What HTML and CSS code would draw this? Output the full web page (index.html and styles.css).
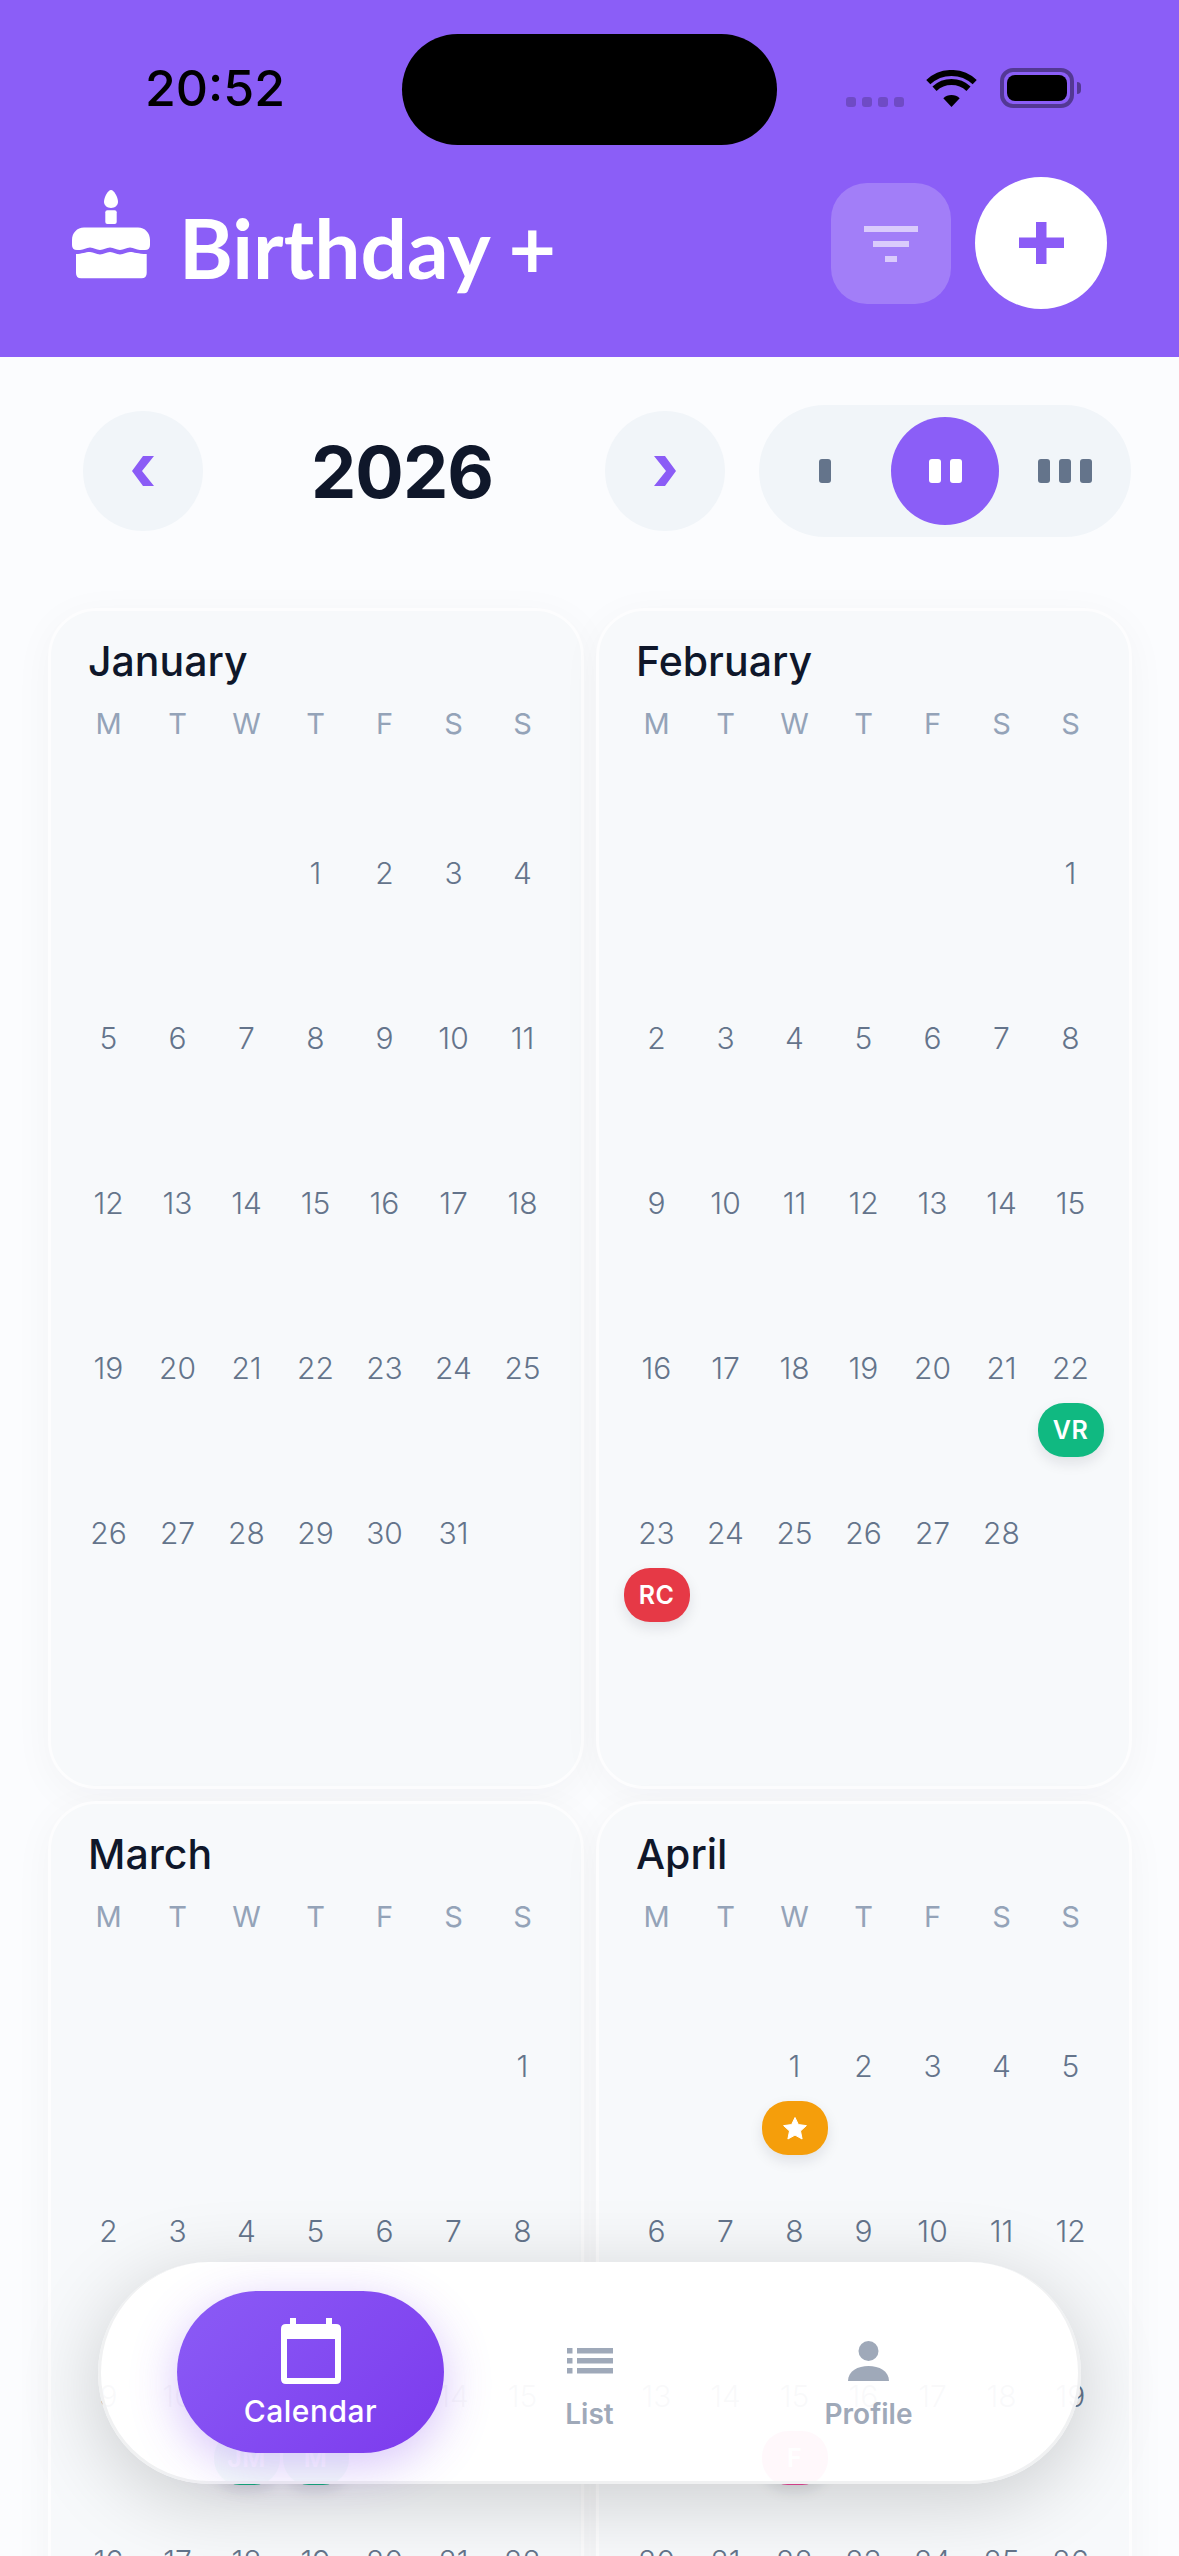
FILE: index.html
```html
<!DOCTYPE html>
<html lang="en">
<head>
	<meta charset="UTF-8">
	<title>Birthday +</title>
	<link rel="stylesheet" href="styles.css">
</head>
<body>
<div class="app">
	<header class="top">
		<div class="status">
			<span class="time">20:52</span>
			<span class="island"></span>
			<div class="status-icons">
				<span class="signal"><i></i><i></i><i></i><i></i></span>
				<svg class="wifi" width="51" height="37" viewBox="0 0 51 37">
					<path d="M2.3 12.1A34 34 0 0 1 48.7 12.1" fill="none" stroke="#000" stroke-width="6"/>
					<path d="M8.5 18.7A25 25 0 0 1 42.5 18.7" fill="none" stroke="#000" stroke-width="6"/>
					<path d="M25.5 37L17.3 28.2A12 12 0 0 1 33.7 28.2Z" fill="#000"/>
				</svg>
				<span class="battery"><i></i></span>
				<span class="battery-cap"></span>
			</div>
		</div>
		<div class="brand-row">
			<svg class="cake" width="78" height="91" viewBox="0 0 78 91" fill="#fff">
				<path d="M39 0C42 0 46 7 46 12C46 15 43 18 39 18C35 18 32 15 32 12C32 7 36 0 39 0Z"/>
				<rect x="33.3" y="20.3" width="11.4" height="13.7" rx="2"/>
				<path d="M12 37.5H66C73 37.5 78 43 78 50V55Q78 60 73 60H68C64 60 62 57.5 58 57.5C54 57.5 52 60 48 60C44 60 42 57.5 38 57.5C34 57.5 32 60 28 60C24 60 22 57.5 18 57.5C14 57.5 12 60 8 60H5Q0 60 0 55V50C0 43 5 37.5 12 37.5Z"/>
				<path d="M4 64C10 64 13 62 18 62C22 62 24 64.5 28 64.5C32 64.5 34 62 38 62C42 62 44 64.5 48 64.5C52 64.5 54 62 58 62C62 62 66 64 74.7 64V83Q74.7 88.3 69.5 88.3H9Q4 88.3 4 83Z"/>
			</svg>
			<span class="brand">Birthday +</span>
			<button class="filter-btn"><i class="f1"></i><i class="f2"></i><i class="f3"></i></button>
			<button class="add-btn">
				<svg width="45" height="42" viewBox="0 0 45 42"><path d="M17 0H27.5V15.6H45V26H27.5V42H17V26H0V15.6H17Z" fill="#8b5cf6"/></svg>
			</button>
		</div>
	</header>

	<div class="controls">
		<button class="round-btn">
			<svg width="22" height="30" viewBox="0 0 22 30"><path d="M0 15L11 0H22L10 15L22 30H11Z" fill="#8b5cf6"/></svg>
		</button>
		<span class="year">2026</span>
		<button class="round-btn">
			<svg width="22" height="30" viewBox="0 0 22 30"><path d="M22 15L11 0H0L12 15L0 30H11Z" fill="#8b5cf6"/></svg>
		</button>
		<div class="columns">
			<span class="col-opt"><i></i></span>
			<span class="col-opt on"><i></i><i></i></span>
			<span class="col-opt"><i></i><i></i><i></i></span>
		</div>
	</div>

	<main class="months">
		<section class="month">
			<h2>January</h2>
			<div class="week"><span>M</span><span>T</span><span>W</span><span>T</span><span>F</span><span>S</span><span>S</span></div>
			<div class="days">
				<div></div><div></div><div></div>
				<div><span>1</span></div><div><span>2</span></div><div><span>3</span></div><div><span>4</span></div>
				<div><span>5</span></div><div><span>6</span></div><div><span>7</span></div><div><span>8</span></div><div><span>9</span></div><div><span>10</span></div><div><span>11</span></div>
				<div><span>12</span></div><div><span>13</span></div><div><span>14</span></div><div><span>15</span></div><div><span>16</span></div><div><span>17</span></div><div><span>18</span></div>
				<div><span>19</span></div><div><span>20</span></div><div><span>21</span></div><div><span>22</span></div><div><span>23</span></div><div><span>24</span></div><div><span>25</span></div>
				<div><span>26</span></div><div><span>27</span></div><div><span>28</span></div><div><span>29</span></div><div><span>30</span></div><div><span>31</span></div>
			</div>
		</section>

		<section class="month">
			<h2>February</h2>
			<div class="week"><span>M</span><span>T</span><span>W</span><span>T</span><span>F</span><span>S</span><span>S</span></div>
			<div class="days">
				<div></div><div></div><div></div><div></div><div></div><div></div>
				<div><span>1</span></div>
				<div><span>2</span></div><div><span>3</span></div><div><span>4</span></div><div><span>5</span></div><div><span>6</span></div><div><span>7</span></div><div><span>8</span></div>
				<div><span>9</span></div><div><span>10</span></div><div><span>11</span></div><div><span>12</span></div><div><span>13</span></div><div><span>14</span></div><div><span>15</span></div>
				<div><span>16</span></div><div><span>17</span></div><div><span>18</span></div><div><span>19</span></div><div><span>20</span></div><div><span>21</span></div><div><span>22</span><b class="tag green">VR</b></div>
				<div><span>23</span><b class="tag red">RC</b></div><div><span>24</span></div><div><span>25</span></div><div><span>26</span></div><div><span>27</span></div><div><span>28</span></div>
			</div>
		</section>

		<section class="month">
			<h2>March</h2>
			<div class="week"><span>M</span><span>T</span><span>W</span><span>T</span><span>F</span><span>S</span><span>S</span></div>
			<div class="days">
				<div></div><div></div><div></div><div></div><div></div><div></div>
				<div><span>1</span></div>
				<div><span>2</span></div><div><span>3</span></div><div><span>4</span></div><div><span>5</span></div><div><span>6</span></div><div><span>7</span></div><div><span>8</span></div>
				<div><span>9</span></div><div><span>10</span></div><div><span>11</span><b class="tag green">JM</b></div><div><span>12</span><b class="tag green">M</b></div><div><span>13</span></div><div><span>14</span></div><div><span>15</span></div>
				<div><span>16</span></div><div><span>17</span></div><div><span>18</span></div><div><span>19</span></div><div><span>20</span></div><div><span>21</span></div><div><span>22</span></div>
				<div><span>23</span></div><div><span>24</span></div><div><span>25</span></div><div><span>26</span></div><div><span>27</span></div><div><span>28</span></div><div><span>29</span></div>
				<div><span>30</span></div><div><span>31</span></div>
			</div>
		</section>

		<section class="month">
			<h2>April</h2>
			<div class="week"><span>M</span><span>T</span><span>W</span><span>T</span><span>F</span><span>S</span><span>S</span></div>
			<div class="days">
				<div></div><div></div>
				<div><span>1</span><b class="tag orange"><svg width="24" height="23" viewBox="0 0 24 23"><path d="M12 0.5L15.4 7.6L23.4 8.6L17.5 14L19.1 22L12 18.1L4.9 22L6.5 14L0.6 8.6L8.6 7.6Z" fill="#fff" stroke="#fff" stroke-linejoin="round"/></svg></b></div>
				<div><span>2</span></div><div><span>3</span></div><div><span>4</span></div><div><span>5</span></div>
				<div><span>6</span></div><div><span>7</span></div><div><span>8</span></div><div><span>9</span></div><div><span>10</span></div><div><span>11</span></div><div><span>12</span></div>
				<div><span>13</span></div><div><span>14</span></div><div><span>15</span><b class="tag pink">F</b></div><div><span>16</span></div><div><span>17</span></div><div><span>18</span></div><div><span>19</span></div>
				<div><span>20</span></div><div><span>21</span></div><div><span>22</span></div><div><span>23</span></div><div><span>24</span></div><div><span>25</span></div><div><span>26</span></div>
				<div><span>27</span></div><div><span>28</span></div><div><span>29</span></div><div><span>30</span></div>
			</div>
		</section>
	</main>

	<nav class="tabbar">
		<a class="tab on">
			<svg width="60" height="66" viewBox="0 0 60 66">
				<path d="M9 0H15V6H45V0H51V6H55Q60 6 60 11V61Q60 66 55 66H5Q0 66 0 61V11Q0 6 5 6H9ZM6 21V60H54V21Z" fill="#fff" fill-rule="evenodd"/>
			</svg>
			<span>Calendar</span>
		</a>
		<a class="tab">
			<svg width="46" height="40" viewBox="0 -7 46 40" fill="#9fa9b9">
				<rect width="5.5" height="5.5"/><rect x="10" width="36" height="5.5"/>
				<rect y="10" width="5.5" height="5.5"/><rect x="10" y="10" width="36" height="5.5"/>
				<rect y="20" width="5.5" height="5.5"/><rect x="10" y="20" width="36" height="5.5"/>
			</svg>
			<span>List</span>
		</a>
		<a class="tab">
			<svg width="41" height="40" viewBox="0 0 41 40" fill="#9fa9b9">
				<circle cx="20.5" cy="10" r="10"/>
				<path d="M0 40C0 30 10 25 20.5 25C31 25 41 30 41 40Z"/>
			</svg>
			<span>Profile</span>
		</a>
	</nav>
</div>
</body>
</html>
```

FILE: styles.css
```css
* {
	margin: 0;
	padding: 0;
	box-sizing: border-box;
}
body {
	background: #fbfcfe;
	font-family: "Inter", "Liberation Sans", sans-serif;
}
button {
	border: 0;
	font: inherit;
}
.app {
	position: relative;
	height: 2556px;
	overflow: hidden;
}

/* purple header */
.top {
	height: 357px;
	background: #8b5ef7;
}
.status {
	display: grid;
	grid-template-columns: 402px 375px 1fr;
	height: 145px;
	padding-top: 34px;
}
.time {
	padding: 29px 0 0 145px;
	font-size: 50px;
	line-height: 50px;
	font-weight: 500;
	color: #000;
}
.island {
	background: #000;
	border-radius: 56px;
}
.status-icons {
	display: flex;
	align-items: flex-end;
	height: 73px;
	padding-left: 69px;
}
.signal {
	display: flex;
	gap: 6px;
	margin-right: 22px;
}
.signal i {
	width: 10px;
	height: 10px;
	border-radius: 3px;
	background: rgba(0, 0, 0, .2);
}
.wifi {
	margin-right: 23px;
}
.battery {
	width: 74px;
	height: 40px;
	padding: 3px;
	margin-bottom: -1px;
	border: 4px solid rgba(0, 0, 0, .4);
	border-radius: 13px;
}
.battery i {
	display: block;
	height: 100%;
	background: #000;
	border-radius: 8px;
}
.battery-cap {
	width: 4px;
	height: 12px;
	margin: 0 0 13px 3px;
	background: rgba(0, 0, 0, .4);
	border-radius: 0 4px 4px 0;
}

.brand-row {
	display: flex;
	align-items: center;
	height: 196px;
	padding-left: 72px;
}
.cake {
	margin: 0 29px 16px 0;
}
.brand {
	flex: 1;
	padding-top: 8px;
	font-family: "Lato", sans-serif;
	font-size: 82px;
	line-height: 100px;
	font-weight: 700;
	color: #fff;
	white-space: nowrap;
}
.filter-btn {
	display: flex;
	flex-direction: column;
	align-items: center;
	gap: 9px;
	width: 120px;
	height: 121px;
	margin-right: 24px;
	padding-top: 43px;
	background: rgba(255, 255, 255, .2);
	border-radius: 36px;
}
.filter-btn i {
	height: 6px;
	background: rgba(255, 255, 255, .6);
}
.f1 { width: 54px; }
.f2 { width: 36px; }
.f3 { width: 12px; }
.add-btn {
	display: flex;
	align-items: center;
	justify-content: center;
	width: 132px;
	height: 132px;
	margin-right: 72px;
	background: #fff;
	border-radius: 50%;
}

/* year and column switch */
.controls {
	display: flex;
	align-items: center;
	height: 132px;
	margin-top: 48px;
	padding-left: 83px;
}
.round-btn {
	display: flex;
	align-items: center;
	justify-content: center;
	width: 120px;
	height: 120px;
	background: #f1f5f9;
	border-radius: 50%;
}
.year {
	width: 402px;
	padding-right: 4px;
	text-align: center;
	font-size: 72px;
	font-weight: 700;
	letter-spacing: -1px;
	color: #0f172a;
}
.columns {
	display: flex;
	gap: 12px;
	margin-left: 34px;
	padding: 12px;
	background: #f1f5f9;
	border-radius: 66px;
}
.col-opt {
	display: flex;
	align-items: center;
	justify-content: center;
	gap: 9px;
	width: 108px;
	height: 108px;
	border-radius: 50%;
}
.col-opt i {
	width: 12px;
	height: 24px;
	background: #64748b;
	border-radius: 3px;
}
.col-opt.on {
	background: #8b5ef7;
}
.col-opt.on i {
	background: #fff;
}

/* month cards */
.months {
	display: grid;
	grid-template-columns: 536px 536px;
	gap: 12px;
	margin-top: 71px;
	padding-left: 48px;
}
.month {
	padding: 26px 24px 5px 23px;
	background: #f7f9fb;
	border: 3px solid rgba(255, 255, 255, .7);
	border-radius: 48px;
	box-shadow: 0 8px 40px rgba(15, 23, 42, .04);
}
.month h2 {
	padding-left: 14px;
	font-size: 41px;
	line-height: 48px;
	font-weight: 550;
	color: #0f172a;
}
.week {
	display: grid;
	grid-template-columns: repeat(7, 1fr);
	margin-top: 21px;
	font-size: 29px;
	line-height: 36px;
	font-weight: 400;
	text-align: center;
	color: #94a3b8;
}
.days {
	display: grid;
	grid-template-columns: repeat(7, 1fr);
	grid-template-rows: repeat(6, 165px);
	margin-top: 49px;
}
.days div {
	display: flex;
	flex-direction: column;
	align-items: center;
	padding-top: 62px;
}
.days span {
	font-size: 30px;
	line-height: 40px;
	font-weight: 350;
	color: #64748b;
}
.tag {
	display: flex;
	align-items: center;
	justify-content: center;
	flex: none;
	width: 66px;
	height: 54px;
	margin-top: 15px;
	border-radius: 26px;
	font-size: 25px;
	font-weight: 600;
	letter-spacing: .5px;
	color: #fff;
	box-shadow: 0 6px 14px rgba(15, 23, 42, .1);
}
.green { background: #10b981; }
.red { background: #e63946; }
.orange { background: #f59e0b; }
.pink { background: #ec4899; }

/* floating tab bar */
.tabbar {
	position: absolute;
	left: 98px;
	bottom: 72px;
	display: flex;
	gap: 12px;
	width: 983px;
	height: 222px;
	padding: 29px 76px 0;
	background: rgba(255, 255, 255, .96);
	border: 3px solid #f0f1f2;
	border-top-width: 0;
	border-radius: 111px;
	box-shadow: 0 16px 80px rgba(0, 0, 0, .18);
}
.tab {
	display: flex;
	flex-direction: column;
	align-items: center;
	justify-content: flex-start;
	width: 267px;
	height: 162px;
	padding-top: 50px;
	font-size: 28px;
	line-height: 36px;
	font-weight: 600;
	color: #9fa9b9;
	border-radius: 81px;
}
.tab svg {
	flex: none;
}
.tab span {
	margin-top: auto;
	margin-bottom: 21px;
}
.tab.on {
	padding-top: 27px;
	font-size: 30px;
	font-weight: 500;
	letter-spacing: .5px;
	color: #fff;
	background: linear-gradient(135deg, #8b5cf6, #7c3aed);
	box-shadow: 0 12px 48px rgba(124, 58, 237, .3);
}
.tab.on span {
	margin-bottom: 24px;
}
```
